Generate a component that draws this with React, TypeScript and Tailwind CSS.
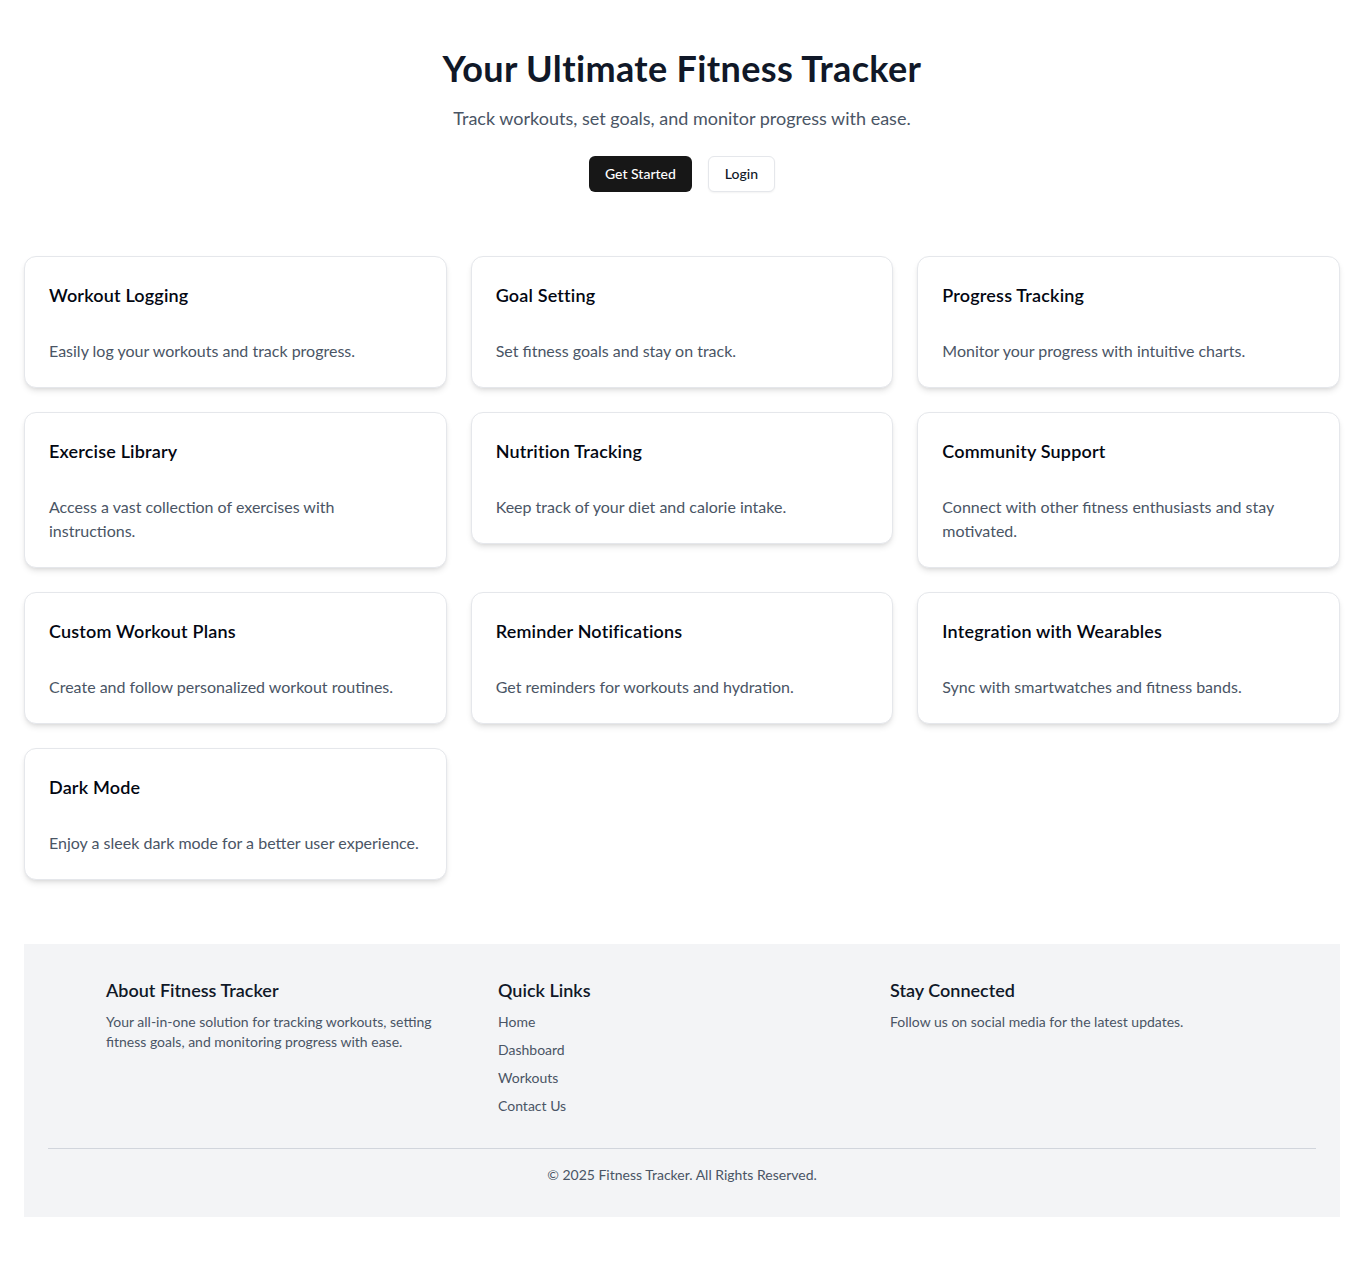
// Landing page for the fitness tracker: hero, feature cards and footer

const features = [
  { title: "Workout Logging", description: "Easily log your workouts and track progress." },
  { title: "Goal Setting", description: "Set fitness goals and stay on track." },
  { title: "Progress Tracking", description: "Monitor your progress with intuitive charts." },
  { title: "Exercise Library", description: "Access a vast collection of exercises with instructions." },
  { title: "Nutrition Tracking", description: "Keep track of your diet and calorie intake." },
  { title: "Community Support", description: "Connect with other fitness enthusiasts and stay motivated." },
  { title: "Custom Workout Plans", description: "Create and follow personalized workout routines." },
  { title: "Reminder Notifications", description: "Get reminders for workouts and hydration." },
  { title: "Integration with Wearables", description: "Sync with smartwatches and fitness bands." },
  { title: "Dark Mode", description: "Enjoy a sleek dark mode for a better user experience." },
];

const quickLinks = ["Home", "Dashboard", "Workouts", "Contact Us"];

// A single feature card
const FeatureCard = ({ title, description }: { title: string; description: string }) => (
  <div className="rounded-xl border border-gray-200 bg-white shadow-md">
    <div className="p-6 pb-[30px]">
      <h3 className="text-lg font-semibold tracking-[0.01em] text-gray-950">{title}</h3>
    </div>
    <div className="px-6 pb-6">
      <p className="text-base text-gray-600">{description}</p>
    </div>
  </div>
);

export default function App() {
  return (
    <div className="min-h-screen bg-white p-6 pb-12 font-['Lato',sans-serif]">
      {/* Hero */}
      <section className="pt-6 mb-16 text-center">
        <h1 className="text-4xl font-bold tracking-[0.01em] text-gray-900">Your Ultimate Fitness Tracker</h1>
        <p className="mt-4 text-lg text-gray-600">Track workouts, set goals, and monitor progress with ease.</p>
        <div className="mt-6 flex justify-center gap-4">
          <button className="h-9 rounded-md bg-neutral-900 px-4 text-sm font-medium text-white">Get Started</button>
          <button className="h-9 rounded-md border border-gray-200 bg-white px-4 text-sm font-medium text-gray-900 shadow-xs">
            Login
          </button>
        </div>
      </section>

      {/* Features */}
      <section className="grid grid-cols-3 items-start gap-6">
        {features.map((f) => (
          <FeatureCard key={f.title} title={f.title} description={f.description} />
        ))}
      </section>

      {/* Footer */}
      <footer className="mt-16 bg-gray-100 px-6 py-8">
        <div className="mx-auto grid max-w-6xl grid-cols-3 gap-6">
          <div>
            <h4 className="text-lg font-semibold text-gray-900">About Fitness Tracker</h4>
            <p className="mt-2 text-sm text-gray-600">
              Your all-in-one solution for tracking workouts, setting fitness goals, and monitoring progress with ease.
            </p>
          </div>
          <div>
            <h4 className="text-lg font-semibold text-gray-900">Quick Links</h4>
            <ul className="mt-2 space-y-2 text-sm text-gray-600">
              {quickLinks.map((link) => (
                <li key={link}>
                  <a href="#">{link}</a>
                </li>
              ))}
            </ul>
          </div>
          <div>
            <h4 className="text-lg font-semibold text-gray-900">Stay Connected</h4>
            <p className="mt-2 text-sm text-gray-600">Follow us on social media for the latest updates.</p>
          </div>
        </div>
        <div className="mt-8 border-t border-gray-300 pt-4 text-center text-sm text-gray-600">
          © 2025 Fitness Tracker. All Rights Reserved.
        </div>
      </footer>
    </div>
  );
}
